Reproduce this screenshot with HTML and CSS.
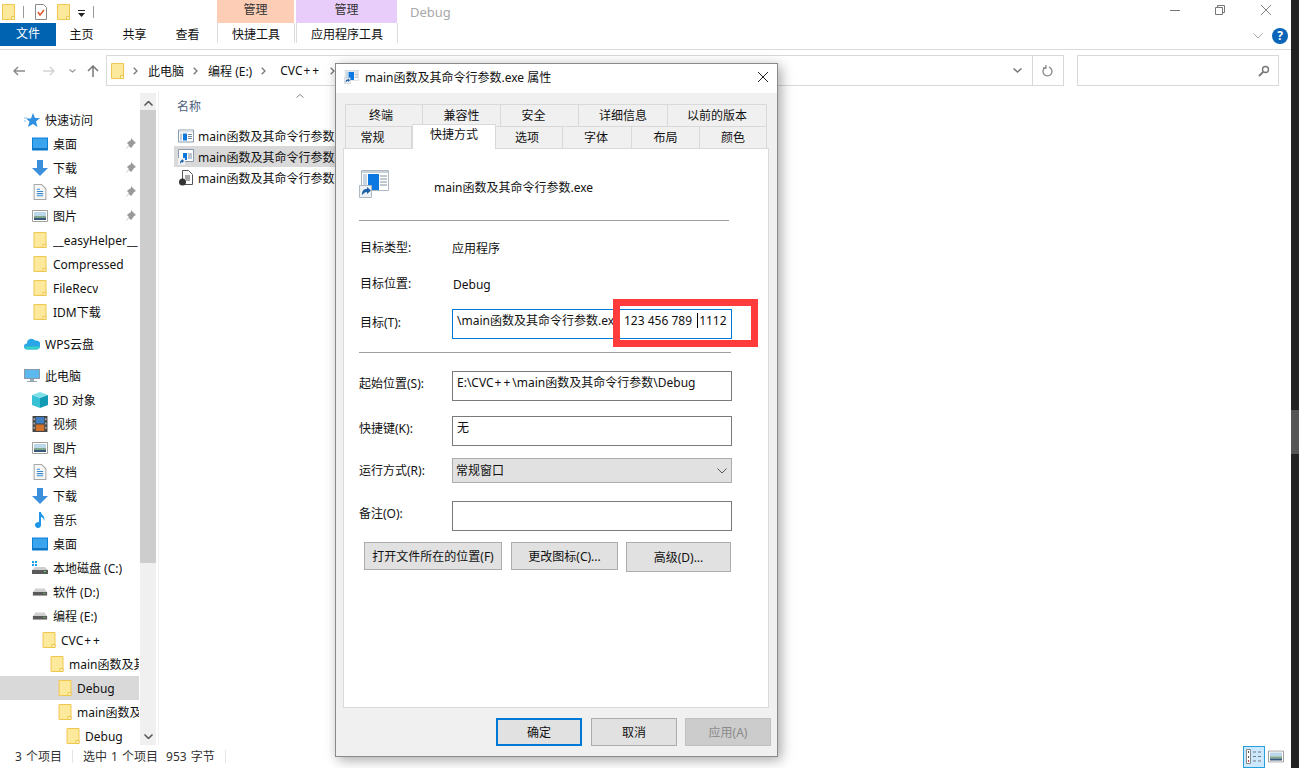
FILE: index.html
```html
<!DOCTYPE html>
<html>
<head>
    <meta charset="utf-8">
    <title>main函数及其命令行参数.exe 属性</title>
    <link rel="stylesheet" href="styles.css">
</head>
<body>
    <svg class="defs" width="0" height="0">
        <symbol id="i-folder" viewBox="0 0 13 16">
            <path d="M.5.5h12v15H.5z" fill="#fde99c" stroke="#eec74e"/>
            <path d="M9.5 15.5v-3h3v3z" fill="#fff3c4" stroke="#eec74e"/>
        </symbol>
        <symbol id="i-desktop" viewBox="0 0 16 13">
            <path d="M0 0h16v13H0z" fill="#0a7fd6"/>
            <path d="M1 1h14v10H1z" fill="#3aa4ee"/>
            <path d="M1 11h14v1H1z" fill="#0b5ea8"/>
        </symbol>
        <symbol id="i-down" viewBox="0 0 16 16">
            <path d="M5 0h6v8h5l-8 8-8-8h5z" fill="#3d8fdc"/>
        </symbol>
        <symbol id="i-doc" viewBox="0 0 12 15">
            <path d="M.5.5h7l4 4v10H.5z" fill="#f8f8f8" stroke="#a8a8a8"/>
            <path d="M3 5h3M3 7h6M3 9h6M3 11h6" stroke="#3a8ad0"/>
        </symbol>
        <symbol id="i-pic" viewBox="0 0 16 12">
            <path d="M.5.5h15v11H.5z" fill="#fff" stroke="#a0a0a0"/>
            <path d="M2 2h12v4H2z" fill="#bcd6ea"/>
            <path d="M2 6h12v2H2z" fill="#7fa58a"/>
            <path d="M2 8h12v2H2z" fill="#33587a"/>
        </symbol>
        <symbol id="i-pin" viewBox="0 0 12 12">
            <path d="M7 0l5 5-2 1-2 3-1 1-2-2-4 4 4-5-2-2 1-1 3-2z" fill="#9a9a9a"/>
        </symbol>
        <symbol id="i-drive" viewBox="-1 -1 18 14">
            <path d="M3 2h10l3 4H0z" fill="#cfcfcf"/>
            <path d="M0 6h16v4H0z" fill="#5a5a5a"/>
            <path d="M12 7h2v1h-2z" fill="#5fd35f"/>
        </symbol>
        <symbol id="i-app" viewBox="0 0 16 13">
            <path d="M.5.5h15v12H.5z" fill="#fff" stroke="#8a9bad"/>
            <path d="M1 1h14v2H1z" fill="#dfe5ea"/>
            <path d="M2 4h2v7H2z" fill="#c2ccd6"/>
            <path d="M5 4h4v7H5z" fill="#0a78d7"/>
            <path d="M10 5h4M10 7h4M10 9h4" stroke="#7a8a9a"/>
        </symbol>
        <symbol id="i-shortcut" viewBox="0 0 30 28">
            <path d="M2.500.5h27v20h-27z" fill="#fff" stroke="#aeb8c2"/>
            <path d="M3 1h26v2H3z" fill="#c8d0d8"/>
            <path d="M4 4h4v15H4z" fill="#c9d7e4"/>
            <path d="M9 4h11v16H9z" fill="#0a78e0"/>
            <path d="M21 6h7M21 9h7M21 12h7M21 15h7" stroke="#8090a0"/>
            <path d="M.5 15.500h12v12H.5z" fill="#eef1f4" stroke="#b0b8c0"/>
            <path d="M3 25c0-5 2-6 5-6v-2l4 3.500-4 3.500v-2c-2 0-3 1-5 3z" fill="#1d5fa8"/>
        </symbol>
        <symbol id="i-crumb" viewBox="0 0 5 8">
            <path d="M.7.700L4 4 .7 7.300" fill="none" stroke="#777" stroke-width="1.300"/>
        </symbol>
    </svg>

    <div class="explorer">
        <div class="titlebar">
            <div class="quick-access">
                <svg class="ico-folder"><use href="#i-folder"/></svg>
                <span class="qa-sep"></span>
                <svg class="qa-check" viewBox="0 0 12 16">
                    <path d="M.5.5h8l3 3v12H.5z" fill="#fff" stroke="#8a8a8a"/>
                    <path d="M3 8l2 3 4-5" fill="none" stroke="#e0562a" stroke-width="1.500"/>
                </svg>
                <svg class="ico-folder"><use href="#i-folder"/></svg>
                <svg class="qa-menu" viewBox="0 0 7 7">
                    <path d="M0 0h7v1H0zM0 3h7L3.500 7z" fill="#222"/>
                </svg>
                <span class="qa-sep"></span>
            </div>
            <div class="context-tab orange">管理</div>
            <div class="context-tab purple">管理</div>
            <div class="window-title">Debug</div>
            <div class="window-controls">
                <svg class="ctl-min" viewBox="0 0 10 1"><path d="M0 .5h10" stroke="#777"/></svg>
                <svg class="ctl-max" viewBox="0 0 10 10"><path d="M.5 2.500h7v7h-7zM2.500 2.500v-2h7v7h-2" fill="none" stroke="#777"/></svg>
                <svg class="ctl-close" viewBox="0 0 10 10"><path d="M0 0l10 10M10 0L0 10" stroke="#777" stroke-width=".9"/></svg>
            </div>
        </div>

        <div class="ribbon">
            <div class="file-tab">文件</div>
            <div class="ribbon-tab home">主页</div>
            <div class="ribbon-tab">共享</div>
            <div class="ribbon-tab">查看</div>
            <div class="ribbon-tab tool orange-tool">快捷工具</div>
            <div class="ribbon-tab tool purple-tool">应用程序工具</div>
            <div class="ribbon-right">
                <svg class="ribbon-collapse" viewBox="0 0 10 6"><path d="M.5.500L5 5 9.500.5" fill="none" stroke="#aaa"/></svg>
                <span class="help">?</span>
            </div>
        </div>

        <div class="navbar">
            <svg class="nav-arrow" viewBox="0 0 12 10"><path d="M12 5H1M5 1L1 5l4 4" fill="none" stroke="#8a8a8a" stroke-width="1.500"/></svg>
            <svg class="nav-arrow" viewBox="0 0 12 10"><path d="M0 5h11M7 1l4 4-4 4" fill="none" stroke="#d4d4d4" stroke-width="1.500"/></svg>
            <svg class="nav-recent" viewBox="0 0 7 4"><path d="M.5.500L3.500 3 6.500.5" fill="none" stroke="#999" stroke-width="1.200"/></svg>
            <svg class="nav-up" viewBox="0 0 12 12"><path d="M6 12V1M1 6l5-5 5 5" fill="none" stroke="#777" stroke-width="1.500"/></svg>
            <div class="address">
                <svg class="ico-folder"><use href="#i-folder"/></svg>
                <svg class="crumb-sep"><use href="#i-crumb"/></svg><span class="crumb">此电脑</span>
                <svg class="crumb-sep"><use href="#i-crumb"/></svg><span class="crumb">编程 (E:)</span>
                <svg class="crumb-sep"><use href="#i-crumb"/></svg><span class="crumb crumb-last">CVC<span class="plus">++</span></span>
                <svg class="crumb-sep"><use href="#i-crumb"/></svg>
                <span class="address-end">
                    <svg class="addr-drop" viewBox="0 0 9 5"><path d="M.5.500L4.500 4 8.500.5" fill="none" stroke="#777" stroke-width="1.500"/></svg>
                    <span class="addr-refresh">
                        <svg viewBox="0 0 12 12"><path d="M4 2.200a4.500 4.500 0 1 0 3 0M4 0v3H1" fill="none" stroke="#888" stroke-width="1.300"/></svg>
                    </span>
                </span>
            </div>
            <div class="search">
                <svg viewBox="0 0 12 12"><circle cx="7.500" cy="4.500" r="3" fill="none" stroke="#777" stroke-width="1.400"/><path d="M5.200 6.800L1 11" stroke="#777" stroke-width="1.800"/></svg>
            </div>
        </div>

        <div class="main">
            <div class="sidebar">
                <div class="tree">
                    <div class="node lvl1 first"><svg class="ico-16" viewBox="0 0 16 14"><path d="M9 0l2 5h5l-4 3.500 1.500 5.500L9 11l-5 3 1.500-5.500L2 5.500h5z" fill="#2f8fe0"/><path d="M0 5h3M0 8h2" stroke="#8cc4f0"/></svg><span class="node-text">快速访问</span></div>
                    <div class="node lvl2"><svg class="ico-16"><use href="#i-desktop"/></svg><span class="node-text">桌面</span><svg class="pin"><use href="#i-pin"/></svg></div>
                    <div class="node lvl2"><svg class="ico-16"><use href="#i-down"/></svg><span class="node-text">下载</span><svg class="pin"><use href="#i-pin"/></svg></div>
                    <div class="node lvl2"><svg class="ico-16"><use href="#i-doc"/></svg><span class="node-text">文档</span><svg class="pin"><use href="#i-pin"/></svg></div>
                    <div class="node lvl2"><svg class="ico-16"><use href="#i-pic"/></svg><span class="node-text">图片</span><svg class="pin"><use href="#i-pin"/></svg></div>
                    <div class="node lvl2"><svg class="ico-16"><use href="#i-folder"/></svg><span class="node-text">__easyHelper__</span></div>
                    <div class="node lvl2"><svg class="ico-16"><use href="#i-folder"/></svg><span class="node-text">Compressed</span></div>
                    <div class="node lvl2"><svg class="ico-16"><use href="#i-folder"/></svg><span class="node-text">FileRecv</span></div>
                    <div class="node lvl2"><svg class="ico-16"><use href="#i-folder"/></svg><span class="node-text">IDM下载</span></div>

                    <div class="node lvl1 group"><svg class="ico-16" viewBox="0 0 16 11"><path d="M3 11a3 3 0 0 1 0-6 4.500 4.500 0 0 1 8-3 4 4 0 0 1 2 9z" fill="#2aa5e8"/><path d="M1 8a3 3 0 0 0 2 3h10a4 4 0 0 0 3-3z" fill="#38d0c8"/></svg><span class="node-text">WPS云盘</span></div>

                    <div class="node lvl1 group"><svg class="ico-16" viewBox="0 0 16 14"><path d="M0 0h16v10H0z" fill="#8a9aa8"/><path d="M1 1h14v8H1z" fill="#5db8ee"/><path d="M6 10h4v2H6zM3 12h10v1H3z" fill="#9aa8b4"/></svg><span class="node-text">此电脑</span></div>
                    <div class="node lvl2"><svg class="ico-16" viewBox="0 0 16 16"><path d="M8 0l8 3-8 3-8-3z" fill="#7fe0ea"/><path d="M0 3l8 3v10l-8-3z" fill="#38c0d4"/><path d="M16 3L8 6v10l8-3z" fill="#129ab4"/></svg><span class="node-text">3D 对象</span></div>
                    <div class="node lvl2"><svg class="ico-16" viewBox="0 0 14 15"><path d="M0 0h14v15H0z" fill="#444"/><path d="M3 1h8v6H3z" fill="#3f7fc0"/><path d="M3 8h8v6H3z" fill="#d0722c"/><path d="M1 2h1v2H1zM1 6h1v2H1zM1 10h1v2H1zM12 2h1v2h-1zM12 6h1v2h-1zM12 10h1v2h-1z" fill="#ddd"/></svg><span class="node-text">视频</span></div>
                    <div class="node lvl2"><svg class="ico-16"><use href="#i-pic"/></svg><span class="node-text">图片</span></div>
                    <div class="node lvl2"><svg class="ico-16"><use href="#i-doc"/></svg><span class="node-text">文档</span></div>
                    <div class="node lvl2"><svg class="ico-16"><use href="#i-down"/></svg><span class="node-text">下载</span></div>
                    <div class="node lvl2"><svg class="ico-16" viewBox="0 0 12 16"><path d="M5 0h2c0 3 5 4 3 9 0-3-2-4-3-4v8a3 3 0 1 1-2-2.800z" fill="#1e96e8"/></svg><span class="node-text">音乐</span></div>
                    <div class="node lvl2"><svg class="ico-16"><use href="#i-desktop"/></svg><span class="node-text">桌面</span></div>
                    <div class="node lvl2"><svg class="ico-16" viewBox="0 0 16 14"><path d="M0 0h2v2H0zM3 0h2v2H3zM0 3h2v2H0zM3 3h2v2H3z" fill="#12a0e8"/><path d="M3 6h10l3 3H0z" fill="#cfcfcf"/><path d="M0 9h16v4H0z" fill="#5a5a5a"/><path d="M12 10h2v1h-2z" fill="#5fd35f"/></svg><span class="node-text">本地磁盘 (C:)</span></div>
                    <div class="node lvl2"><svg class="ico-16"><use href="#i-drive"/></svg><span class="node-text">软件 (D:)</span></div>
                    <div class="node lvl2"><svg class="ico-16"><use href="#i-drive"/></svg><span class="node-text">编程 (E:)</span></div>
                    <div class="node lvl3"><svg class="ico-16"><use href="#i-folder"/></svg><span class="node-text">CVC<span class="plus">++</span></span></div>
                    <div class="node lvl4"><svg class="ico-16"><use href="#i-folder"/></svg><span class="node-text">main函数及其命令行参数</span></div>
                    <div class="node lvl5 selected"><svg class="ico-16"><use href="#i-folder"/></svg><span class="node-text">Debug</span></div>
                    <div class="node lvl5"><svg class="ico-16"><use href="#i-folder"/></svg><span class="node-text">main函数及其命令行参数</span></div>
                    <div class="node lvl6"><svg class="ico-16"><use href="#i-folder"/></svg><span class="node-text">Debug</span></div>
                </div>
                <div class="scrollbar">
                    <svg class="scroll-arrow" viewBox="0 0 9 5"><path d="M.5 4.500L4.500.5l4 4" fill="none" stroke="#555" stroke-width="1.500"/></svg>
                    <div class="scroll-thumb"></div>
                    <svg class="scroll-arrow down" viewBox="0 0 9 5"><path d="M.5.500l4 4 4-4" fill="none" stroke="#555" stroke-width="1.500"/></svg>
                </div>
            </div>

            <div class="files">
                <svg class="sort-arrow" viewBox="0 0 8 4"><path d="M.5 3.500L4 .5l3.500 3" fill="none" stroke="#888"/></svg>
                <div class="files-header">名称</div>
                <div class="file-row"><svg class="ico-16"><use href="#i-app"/></svg><span>main函数及其命令行参数.exe</span></div>
                <div class="file-row selected">
                    <svg class="ico-16" viewBox="0 0 16 16"><path d="M.5.500h15v12H.5z" fill="#fff" stroke="#8a9bad"/><path d="M5 4h4v7H5z" fill="#0a78d7"/><path d="M10 5h4M10 7h4M10 9h4" stroke="#7a8a9a"/><path d="M0 9h7v7H0z" fill="#eef1f4"/><path d="M2 15c0-3 1-4 2-4v-1l2 2-2 2v-1c-1 0-1 1-2 2z" fill="#1d5fa8"/></svg>
                    <span>main函数及其命令行参数.exe</span>
                </div>
                <div class="file-row">
                    <svg class="ico-16" viewBox="0 0 14 16"><path d="M3.500.5h6l4 4v10h-10z" fill="#fff" stroke="#555"/><path d="M6 6h5M6 8h5M7 10h4" stroke="#555"/><circle cx="3.500" cy="12" r="3.500" fill="#333"/></svg>
                    <span>main函数及其命令行参数.ilk</span>
                </div>
            </div>
        </div>

        <div class="statusbar">
            <span class="status-item">3 个项目</span>
            <span class="status-item">选中 1 个项目<span class="status-size">953 字节</span></span>
            <div class="view-switch">
                <span class="view-btn active">
                    <svg viewBox="0 0 16 15"><path d="M.5.500h4v14h-4z" fill="#fff" stroke="#888"/><path d="M2 2h1v2H2zM2 7h1v2H2z" fill="#555"/><path d="M2 11h1v2H2z" fill="#c44"/><path d="M7 3h3M12 3h3M7 7.500h3M12 7.500h3M7 12h3M12 12h3" stroke="#777" stroke-width="1.200"/></svg>
                </span>
                <span class="view-btn">
                    <svg viewBox="0 0 14 11"><use href="#i-pic"/></svg>
                </span>
            </div>
        </div>
    </div>
    <div class="outer-thumb"></div>

    <div class="dialog">
        <div class="dialog-title">
            <svg class="dialog-icon"><use href="#i-shortcut"/></svg>
            <span class="dialog-name">main函数及其命令行参数.exe 属性</span>
            <svg class="dialog-close" viewBox="0 0 10 10"><path d="M0 0l10 10M10 0L0 10" stroke="#222"/></svg>
        </div>
        <div class="dialog-body">
            <div class="tabs back-tabs">
                <span class="tab t1">终端</span>
                <span class="tab t2">兼容性</span>
                <span class="tab t3">安全</span>
                <span class="tab t4">详细信息</span>
                <span class="tab t5">以前的版本</span>
            </div>
            <div class="tabs front-tabs">
                <span class="tab t6">常规</span>
                <span class="tab t7 active">快捷方式</span>
                <span class="tab t8">选项</span>
                <span class="tab t9">字体</span>
                <span class="tab t10">布局</span>
                <span class="tab t11">颜色</span>
            </div>
            <div class="panel">
                <div class="shortcut-head">
                    <svg class="shortcut-icon"><use href="#i-shortcut"/></svg>
                    <span>main函数及其命令行参数.exe</span>
                </div>
                <div class="rule rule-top"></div>
                <div class="field info first-info"><label>目标类型:</label><span>应用程序</span></div>
                <div class="field info"><label>目标位置:</label><span class="info-debug">Debug</span></div>
                <div class="field target-row">
                    <label>目标(T):</label>
                    <div class="input focused">
                        <span class="target-path">\main函数及其命令行参数.exe"</span>
                        <span class="target-args">123 456 789 <i class="caret"></i>1112</span>
                    </div>
                </div>
                <div class="rule rule-mid"></div>
                <div class="field start-row"><label>起始位置(S):</label><div class="input">E:\CVC<span class="plus">++</span>\main函数及其命令行参数\Debug</div></div>
                <div class="field key-row"><label>快捷键(K):</label><div class="input">无</div></div>
                <div class="field run-row">
                    <label>运行方式(R):</label>
                    <div class="select"><span>常规窗口</span><svg viewBox="0 0 10 6"><path d="M.5.500L5 5 9.500.5" fill="none" stroke="#555"/></svg></div>
                </div>
                <div class="field note-row"><label>备注(O):</label><div class="input"></div></div>
                <div class="panel-buttons">
                    <button class="btn open-btn">打开文件所在的位置(F)</button>
                    <button class="btn icon-btn">更改图标(C)...</button>
                    <button class="btn adv-btn">高级(D)...</button>
                </div>
            </div>
            <div class="dialog-buttons">
                <button class="btn main-btn default">确定</button>
                <button class="btn main-btn">取消</button>
                <button class="btn main-btn disabled">应用(A)</button>
            </div>
        </div>
        <div class="red-box"></div>
    </div>
</body>
</html>
```

FILE: styles.css
```css
* {
    box-sizing: border-box;
}
html, body {
    margin: 0;
    height: 100%;
    overflow: hidden;
}
body {
    position: relative;
    background-color: #222;
    font-family: "Noto Sans", "Noto Sans CJK SC", sans-serif;
    font-size: 12px;
    color: #111;
}
svg {
    display: block;
    flex: none;
}
.defs {
    position: absolute;
}
.plus {
    letter-spacing: 2px;
    padding-left: 1px;
}
.outer-thumb {
    position: absolute;
    left: 1291px;
    top: 410px;
    width: 8px;
    height: 44px;
    background-color: #555;
}

/* Okno pruzkumniku */
.explorer {
    width: 1291px;
    height: 768px;
    background-color: #fff;
    display: flex;
    flex-direction: column;
}
.titlebar {
    height: 23px;
    display: flex;
    align-items: stretch;
    flex: none;
}
.quick-access {
    width: 217px;
    display: flex;
    align-items: center;
    padding: 1px 0 0 2px;
}
.ico-folder {
    width: 13px;
    height: 16px;
}
.qa-sep {
    width: 1px;
    height: 12px;
    margin: 0 10px 0 8px;
    background-color: #999;
}
.qa-check {
    width: 12px;
    height: 16px;
    margin: 0 10px 0 1px;
}
.qa-menu {
    width: 7px;
    height: 7px;
    margin: 2px 0 0 8px;
}
.quick-access .qa-sep:last-child {
    margin-left: 8px;
}
.context-tab {
    height: 23px;
    line-height: 19px;
    text-align: center;
    color: #333;
}
.orange {
    width: 77px;
    background-color: #fdcdb6;
}
.purple {
    width: 101px;
    margin-left: 2px;
    background-color: #e8cdfb;
}
.window-title {
    margin-left: 13px;
    line-height: 24px;
    font-size: 13px;
    color: #a8a8a8;
}
.window-controls {
    margin-left: auto;
    display: flex;
    align-items: center;
    padding: 0 20px 3px 0;
}
.ctl-min {
    width: 10px;
    height: 1px;
}
.ctl-max {
    width: 10px;
    height: 10px;
    margin-left: 35px;
}
.ctl-close {
    width: 10px;
    height: 10px;
    margin-left: 36px;
}
.ribbon {
    height: 27px;
    display: flex;
    flex: none;
    border-bottom: 1px solid #dadada;
}
.file-tab {
    width: 56px;
    height: 23px;
    line-height: 22px;
    text-align: center;
    background-color: #0063b1;
    color: #fff;
}
.ribbon-tab {
    width: 53px;
    height: 23px;
    line-height: 23px;
    text-align: center;
}
.ribbon-tab.home {
    margin-left: -1px;
}
.ribbon-tab.tool {
    border-left: 1px solid #dcdcdc;
    border-right: 1px solid #dcdcdc;
    height: 20px;
    line-height: 23px;
}
.orange-tool {
    width: 78px;
    margin-left: 3px;
}
.purple-tool {
    width: 102px;
    margin-left: 1px;
}
.ribbon-right {
    margin-left: auto;
    display: flex;
    align-items: center;
    height: 23px;
    padding: 0 3px 0 0;
    margin-top: 1px;
}
.ribbon-collapse {
    width: 10px;
    height: 6px;
}
.help {
    width: 16px;
    height: 16px;
    margin-left: 9px;
    border-radius: 50%;
    background-color: #0a64b8;
    color: #fff;
    font-weight: 700;
    font-size: 12px;
    line-height: 16px;
    text-align: center;
}
.navbar {
    height: 41px;
    display: flex;
    align-items: center;
    flex: none;
    padding: 0 12px 0 13px;
}
.nav-arrow {
    width: 12px;
    height: 10px;
    margin-right: 18px;
}
.nav-recent {
    width: 7px;
    height: 4px;
    margin-left: -4px;
}
.nav-up {
    width: 12px;
    height: 12px;
    margin: 0 7px 0 11px;
}
.address {
    width: 958px;
    height: 31px;
    border: 1px solid #d9d9d9;
    display: flex;
    align-items: center;
    padding-left: 4px;
}
.crumb-sep {
    width: 5px;
    height: 8px;
    margin: 1px 10px 0 9px;
}
.crumb-last {
    margin-left: 4px;
}
.address-end {
    margin-left: auto;
    display: flex;
    align-items: center;
    height: 100%;
}
.addr-drop {
    width: 9px;
    height: 5px;
    margin-right: 10px;
}
.addr-refresh {
    width: 31px;
    height: 100%;
    border-left: 1px solid #d9d9d9;
    display: flex;
    align-items: center;
    justify-content: center;
}
.addr-refresh svg {
    width: 12px;
    height: 12px;
}
.search {
    width: 202px;
    height: 31px;
    margin-left: 13px;
    border: 1px solid #d9d9d9;
    display: flex;
    align-items: center;
    justify-content: flex-end;
    padding-right: 8px;
}
.search svg {
    width: 12px;
    height: 12px;
}

/* Hlavni cast */
.main {
    flex: 1;
    min-height: 0;
    display: flex;
}
.sidebar {
    width: 159px;
    display: flex;
    border-right: 1px solid #f0f0f0;
    flex: none;
}
.tree {
    width: 140px;
    padding-right: 1px;
    overflow: hidden;
    flex: none;
}
.node {
    height: 24px;
    display: flex;
    align-items: center;
    white-space: nowrap;
}
.node.first {
    margin-top: 17px;
}
.node.group {
    margin-top: 8px;
}
.node.selected {
    background-color: #d9d9d9;
}
.lvl1 {
    padding-left: 24px;
}
.lvl2 {
    padding-left: 32px;
}
.lvl3 {
    padding-left: 41px;
}
.lvl4 {
    padding-left: 49px;
}
.lvl5 {
    padding-left: 57px;
}
.lvl6 {
    padding-left: 65px;
}
.ico-16 {
    width: 16px;
    height: 16px;
    margin-right: 5px;
}
.lvl3 .ico-16, .lvl4 .ico-16, .lvl5 .ico-16, .lvl6 .ico-16 {
    margin-right: 4px;
}
.node-text {
    overflow: hidden;
}
.pin {
    width: 12px;
    height: 12px;
    margin-left: auto;
    margin-right: 3px;
}
.scrollbar {
    width: 16px;
    margin-top: 2px;
    background-color: #f0f0f0;
    display: flex;
    flex-direction: column;
    align-items: center;
}
.scroll-arrow {
    width: 9px;
    height: 5px;
    margin-top: 8px;
}
.scroll-thumb {
    width: 16px;
    height: 453px;
    margin-top: 4px;
    background-color: #cdcdcd;
}
.scroll-arrow.down {
    margin-top: 171px;
}
.files {
    flex: 1;
    padding: 3px 0 0 15px;
}
.sort-arrow {
    width: 8px;
    height: 4px;
    margin-left: 122px;
}
.files-header {
    height: 20px;
    line-height: 18px;
    padding-left: 3px;
    color: #4c607a;
    margin-bottom: 7px;
}
.file-row {
    width: 161px;
    height: 21px;
    display: flex;
    align-items: center;
    padding-left: 4px;
    white-space: nowrap;
}
.file-row .ico-16 {
    margin-right: 4px;
}
.file-row.selected {
    background-color: #d9d9d9;
}
.statusbar {
    height: 23px;
    flex: none;
    display: flex;
    align-items: center;
    padding-left: 15px;
    color: #333;
    word-spacing: 1px;
}
.status-item {
    padding-right: 10px;
    margin-right: 10px;
    border-right: 1px solid #e4e4e4;
    line-height: 13px;
}
.status-size {
    margin-left: 8px;
}
.view-switch {
    margin-left: auto;
    display: flex;
    align-items: center;
    margin-right: 4px;
}
.view-btn {
    width: 22px;
    height: 22px;
    display: flex;
    align-items: center;
    justify-content: center;
}
.view-btn svg {
    width: 16px;
    height: 15px;
}
.view-btn.active {
    background-color: #cce8ff;
    border: 1px solid #26a0da;
}

/* Dialog vlastnosti */
.dialog {
    position: absolute;
    left: 335px;
    top: 63px;
    width: 443px;
    height: 694px;
    background-color: #f0f0f0;
    border: 1px solid #8a8a8a;
    box-shadow: 3px 3px 12px rgba(0, 0, 0, 0.35);
    display: flex;
    flex-direction: column;
}
.dialog-title {
    height: 29px;
    flex: none;
    background-color: #fff;
    display: flex;
    align-items: center;
    padding: 0 0 3px 8px;
    font-size: 12px;
}
.dialog-icon {
    width: 15px;
    height: 14px;
    margin-right: 6px;
}
.dialog-name {
    color: #111;
}
.dialog-close {
    width: 10px;
    height: 10px;
    margin-left: auto;
    margin-right: 9px;
}
.dialog-body {
    flex: 1;
    min-height: 0;
    display: flex;
    flex-direction: column;
    padding-top: 11px;
}
.tabs {
    height: 22px;
    display: flex;
    padding-left: 9px;
    flex: none;
}
.tab {
    height: 22px;
    line-height: 21px;
    text-align: center;
    background-color: #f0f0f0;
    border: 1px solid #d9d9d9;
    border-left-width: 0;
    border-bottom-width: 0;
}
.tab:first-child {
    border-left-width: 1px;
}
.t1 { width: 78px; padding-right: 6px; }
.t2 { width: 78px; }
.t3 { width: 78px; padding-right: 12px; }
.t4 { width: 89px; }
.t5 { width: 99px; }
.t6 { width: 67px; padding-right: 12px; }
.t7 { width: 84px; }
.t8 { width: 67px; padding-right: 4px; }
.t9 { width: 69px; padding-right: 2px; }
.t10 { width: 68px; }
.t11 { width: 67px; }
.tab.active {
    position: relative;
    z-index: 1;
    height: 25px;
    margin-top: -2px;
    line-height: 20px;
    background-color: #fff;
    border-left-width: 1px;
}
.panel {
    width: 426px;
    height: 560px;
    margin-left: 7px;
    flex: none;
    background-color: #fff;
    border: 1px solid #d9d9d9;
    padding: 0 0 0 15px;
}
.shortcut-head {
    display: flex;
    align-items: center;
    height: 28px;
    margin-top: 21px;
}
.shortcut-icon {
    width: 30px;
    height: 28px;
    margin-right: 45px;
}
.shortcut-head span {
    margin-top: 6px;
}
.rule {
    height: 1px;
    background-color: #a0a0a0;
}
.rule-top {
    width: 370px;
    margin-top: 22px;
}
.rule-mid {
    width: 372px;
    margin-top: 13px;
}
.field {
    display: flex;
    align-items: center;
}
.field label {
    width: 93px;
    flex: none;
    margin-top: -2px;
}
.info {
    height: 20px;
    margin-top: 16px;
}
.info.first-info {
    margin-top: 17px;
}
.info label, .target-row label {
    padding-left: 1px;
}
.info-debug {
    padding-left: 1px;
}
.target-row {
    margin-top: 15px;
}
.target-row label {
    margin-bottom: 2px;
}
.start-row label, .key-row label, .note-row label {
    margin-bottom: 4px;
}
.input {
    width: 280px;
    height: 30px;
    border: 1px solid #7a7a7a;
    background-color: #fff;
    padding: 3px 0 0 4px;
    line-height: 16px;
    white-space: nowrap;
    overflow: hidden;
}
.input.focused {
    border-color: #0078d7;
    display: flex;
}
.target-path {
    width: 160px;
    overflow: hidden;
    flex: none;
}
.target-args {
    padding-left: 7px;
}
.caret {
    display: inline-block;
    width: 1px;
    height: 15px;
    margin: 0 1px 0 2px;
    background-color: #000;
    vertical-align: -3px;
}
.start-row {
    margin-top: 18px;
}
.key-row {
    margin-top: 15px;
}
.run-row {
    margin-top: 12px;
}
.note-row {
    margin-top: 18px;
}
.select {
    width: 280px;
    height: 25px;
    background-color: #e1e1e1;
    border: 1px solid #adadad;
    display: flex;
    align-items: center;
    justify-content: space-between;
    padding: 0 4px 2px 3px;
}
.select svg {
    width: 10px;
    height: 6px;
    margin-top: 2px;
}
.btn {
    font-family: inherit;
    font-size: 12px;
    color: #111;
    background-color: #e1e1e1;
    border: 1px solid #adadad;
    padding: 0;
}
.panel-buttons {
    display: flex;
    align-items: flex-start;
    margin: 11px 0 0 5px;
}
.open-btn {
    width: 138px;
    height: 28px;
}
.icon-btn {
    width: 107px;
    height: 28px;
    margin-left: 9px;
}
.adv-btn {
    width: 105px;
    height: 30px;
    margin-left: 8px;
}
.dialog-buttons {
    display: flex;
    gap: 9px;
    padding: 10px 0 0 160px;
}
.main-btn {
    width: 86px;
    height: 28px;
}
.main-btn.default {
    border: 2px solid #0078d7;
}
.main-btn.disabled {
    margin-left: -1px;
    background-color: #cccccc;
    border-color: #bfbfbf;
    color: #8a8a8a;
}

/* Cervene oramovani pres dialog */
.red-box {
    position: absolute;
    left: 277px;
    top: 235px;
    width: 145px;
    height: 48px;
    border: 7px solid #ff3b3b;
}
```
